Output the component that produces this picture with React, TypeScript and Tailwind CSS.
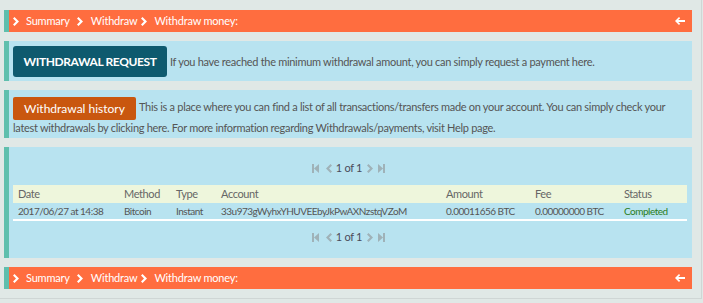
const font = { fontFamily: "Lato, 'Open Sans', sans-serif" };

function Chevron({ className = "" }: { className?: string }) {
  return (
    <svg viewBox="0 0 6 9" className={`h-[9px] w-[6px] shrink-0 ${className}`} fill="currentColor">
      <path d="M0 1.5 1.5 0 6 4.5 1.5 9 0 7.5 3 4.5Z" />
    </svg>
  );
}

function Breadcrumb() {
  return (
    <div className="flex h-[22px] items-center border-l-[5px] border-[#5fbfad] bg-[#ff6d3f] pr-[7px] text-[11px] tracking-[-0.2px] text-white">
      <Chevron className="ml-[4px]" />
      <span className="ml-[7px]">Summary</span>
      <Chevron className="ml-[7px]" />
      <span className="ml-[8px]">Withdraw</span>
      <Chevron className="ml-[4px]" />
      <span className="ml-[7px]">Withdraw money:</span>
      <svg viewBox="0 0 10 8" className="ml-auto h-[8px] w-[10px]" fill="currentColor">
        <path d="M0 4 4 0 5.2 1.2 3.2 3H10V5H3.2L5.2 6.8 4 8Z" />
      </svg>
    </div>
  );
}

function Pager() {
  return (
    <div className="flex h-[18px] items-center justify-center gap-[4px] pr-[3px] text-[11px] tracking-[-0.3px] text-[#4a4a5a]">
      <svg viewBox="0 0 7 9" className="h-[9px] w-[7px] text-[#9fb2b8]" fill="currentColor">
        <path d="M0 0H2V9H0ZM2 4.5 7 0V9Z" />
      </svg>
      <svg viewBox="0 0 6 9" className="ml-[3px] h-[9px] w-[6px] text-[#9fb2b8]" fill="currentColor">
        <path d="M6 1.5 4.5 0 0 4.5 4.5 9 6 7.5 3 4.5Z" />
      </svg>
      <span>1 of 1</span>
      <svg viewBox="0 0 6 9" className="ml-[1px] h-[9px] w-[6px] text-[#9fb2b8]" fill="currentColor">
        <path d="M0 1.5 1.5 0 6 4.5 1.5 9 0 7.5 3 4.5Z" />
      </svg>
      <svg viewBox="0 0 7 9" className="ml-[1px] h-[9px] w-[7px] text-[#9fb2b8]" fill="currentColor">
        <path d="M5 0H7V9H5ZM5 4.5 0 0V9Z" />
      </svg>
    </div>
  );
}

export default function App() {
  return (
    <div className="h-[303px] w-[703px] bg-[#e0e8e6]" style={font}>
      <div className="flex h-[299px] w-[702px] flex-col gap-[9px] border-r border-b border-[#cfd6d5] pt-[10px] pl-[4px] pr-[9px]">
        <Breadcrumb />

        <div className="flex h-[40px] items-start border-l-[5px] border-[#5fbfad] bg-[#b8e3f0] pt-[5px] pl-[4px] text-[11px] tracking-[-0.3px] text-[#555]">
          <button className="h-[31px] w-[154px] shrink-0 rounded-[3px] bg-[#0e5a6e] text-[12px] font-bold tracking-[-0.4px] text-white">
            WITHDRAWAL REQUEST
          </button>
          <span className="ml-[3px] mt-[8px] whitespace-nowrap">
            If you have reached the minimum withdrawal amount, you can simply request a payment here.
          </span>
        </div>

        <div className="h-[48px] border-l-[5px] border-[#5fbfad] bg-[#b8e3f0] pt-[7px] pl-[4px] pr-[6px] text-[11px] leading-[20px] tracking-[-0.3px] text-[#555]">
          <button className="my-[-2px] mr-[3px] inline-block h-[23px] w-[123px] rounded-[2px] bg-[#c9570f] align-middle text-[12px] leading-[23px] tracking-normal text-white">
            Withdrawal history
          </button>
          This is a place where you can find a list of all transactions/transfers made on your account. You can simply check your latest withdrawals by clicking here. For more information regarding Withdrawals/payments, visit Help page.
        </div>

        <div className="h-[111px] border-l-[5px] border-[#5fbfad] bg-[#b8e3f0] pt-[12px] pl-[4px] pr-[5px] text-[10px] text-[#555]">
          <Pager />
          <div className="mt-[8px] grid h-[18px] grid-cols-[106px_52px_45px_225px_89px_89px_1fr] items-center bg-[#eef6dc] pl-[5px] text-[11px] tracking-[-0.4px] text-[#666]">
            <span>Date</span>
            <span>Method</span>
            <span>Type</span>
            <span>Account</span>
            <span>Amount</span>
            <span>Fee</span>
            <span>Status</span>
          </div>
          <div className="grid h-[18px] grid-cols-[106px_52px_45px_225px_89px_89px_1fr] items-center border-b-2 border-white pl-[5px] tracking-[-0.5px]">
            <span>2017/06/27 at 14:38</span>
            <span>Bitcoin</span>
            <span>Instant</span>
            <span>33u973gWyhxYHUVEEbyJkPwAXNzstqVZoM</span>
            <span>0.00011656 BTC</span>
            <span>0.00000000 BTC</span>
            <span className="text-[#2a7d22]">Completed</span>
          </div>
          <div className="mt-[7px]">
            <Pager />
          </div>
        </div>

        <Breadcrumb />
      </div>
    </div>
  );
}
